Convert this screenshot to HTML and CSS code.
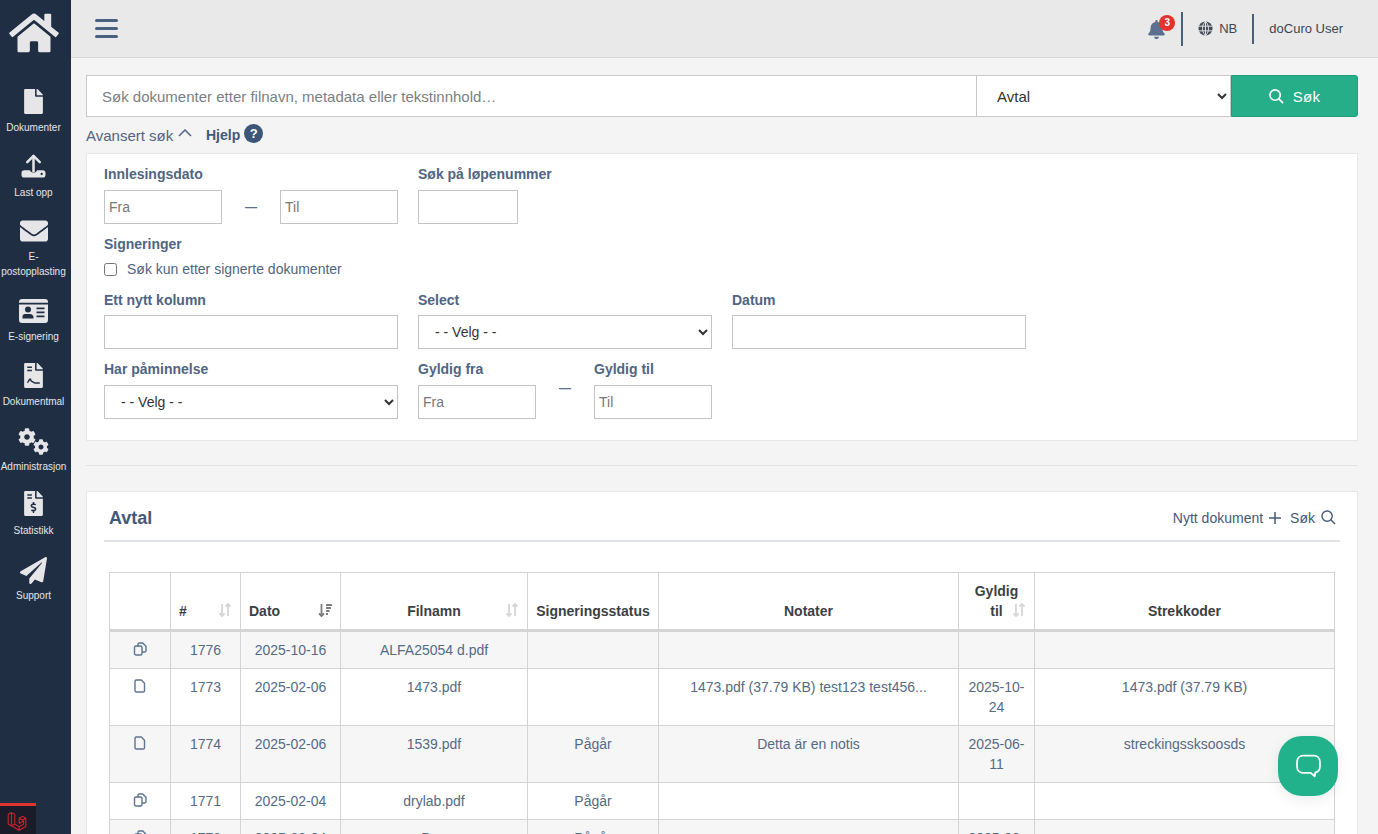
FILE: index.html
```html
<!DOCTYPE html>
<html lang="nb">
<head>
<meta charset="utf-8">
<title>doCuro</title>
<link rel="stylesheet" href="styles.css">
</head>
<body>
<div class="app">
  <aside class="sidebar">
    <a class="home"><svg viewBox="0 0 576 512" class="home-icon"><path d="M280.37 148.26L96 300.11V464a16 16 0 0 0 16 16l112.06-.29a16 16 0 0 0 15.92-16V368a16 16 0 0 1 16-16h64a16 16 0 0 1 16 16v95.64a16 16 0 0 0 16 16.05L464 480a16 16 0 0 0 16-16V300L295.67 148.26a12.19 12.19 0 0 0-15.3 0zM571.6 251.47L488 182.56V44.05a12 12 0 0 0-12-12h-56a12 12 0 0 0-12 12v72.61L318.47 43a48 48 0 0 0-61 0L4.34 251.47a12 12 0 0 0-1.6 16.9l25.5 31A12 12 0 0 0 45.15 301l235.22-193.74a12.19 12.19 0 0 1 15.3 0L530.9 301a12 12 0 0 0 16.9-1.6l25.5-31a12 12 0 0 0-1.7-16.93z"/></svg></a>
    <nav class="nav">
      <a class="nav-item"><span class="nav-icon"><svg viewBox="0 0 384 512" class="i-file"><path d="M224 136V0H24C10.7 0 0 10.7 0 24v464c0 13.3 10.7 24 24 24h336c13.3 0 24-10.7 24-24V160H248c-13.2 0-24-10.8-24-24zm160-14.1v6.1H256V0h6.1c6.4 0 12.5 2.5 17 7l97.9 98c4.5 4.5 7 10.6 7 16.9z"/></svg></span><span class="nav-label">Dokumenter</span></a>
      <a class="nav-item"><span class="nav-icon"><svg viewBox="0 0 26 26" class="i-upload"><path d="M13 2.5V18" class="st"/><path d="M6.5 8.5L13 2l6.5 6.5" class="st"/><path d="M3.5 17H9c.5 0 .8 2.4 4 2.4S16.500 17 17 17h5.500a3 3 0 0 1 3 3v1.500a3 3 0 0 1-3 3h-19a3 3 0 0 1-3-3V20a3 3 0 0 1 3-3z"/><circle cx="21.500" cy="20.800" r="1.200" class="hole"/></svg></span><span class="nav-label">Last opp</span></a>
      <a class="nav-item nav-tall"><span class="nav-icon"><svg viewBox="0 0 512 512" class="i-wide"><path d="M502.3 190.800c3.900-3.100 9.700-.2 9.700 4.700V400c0 26.500-21.500 48-48 48H48c-26.500 0-48-21.500-48-48V195.600c0-5 5.700-7.800 9.700-4.700 22.400 17.400 52.100 39.500 154.100 113.600 21.100 15.400 56.700 47.800 92.200 47.600 35.700.3 72-32.800 92.300-47.600 102-74.100 131.600-96.300 154-113.700zM256 320c23.200.4 56.600-29.200 73.400-41.400 132.700-96.300 142.800-104.700 173.400-128.700 5.800-4.500 9.200-11.500 9.200-18.900v-19c0-26.500-21.500-48-48-48H48C21.500 64 0 85.500 0 112v19c0 7.400 3.400 14.300 9.200 18.900 30.600 23.900 40.700 32.400 173.400 128.700 16.800 12.200 50.200 41.800 73.400 41.400z"/></svg></span><span class="nav-label">E-postopplasting</span></a>
      <a class="nav-item"><span class="nav-icon"><svg viewBox="0 0 29 24" class="i-id"><path d="M3 0h23a3 3 0 0 1 3 3v.8H0V3a3 3 0 0 1 3-3z"/><path fill-rule="evenodd" d="M0 5.500h29V21a3 3 0 0 1-3 3H3a3 3 0 0 1-3-3zM17.500 8.500v1.800h8V8.500zm0 4v1.800h8v-1.800zm0 4v1.800h8v-1.800zM9 7.500a3 3 0 1 0 0 6 3 3 0 0 0 0-6zM3.500 19.500h11v-1.300c0-2-1.500-3.300-3.500-3.300H6c-2 0-2.500 1.300-2.500 3.300z"/></svg></span><span class="nav-label">E-signering</span></a>
      <a class="nav-item"><span class="nav-icon"><svg viewBox="0 0 384 512" class="i-file"><path fill-rule="evenodd" d="M224 136V0H24C10.700 0 0 10.700 0 24v464c0 13.300 10.700 24 24 24h336c13.300 0 24-10.700 24-24V160H248c-13.200 0-24-10.800-24-24zM64 72v32h96V72zm0 64v32h96v-32zM384 121.900v6.100H256V0h6.100c6.400 0 12.500 2.500 17 7l97.900 98c4.500 4.500 7 10.600 7 16.900z"/><path d="M64 398c30 0 36-70 58-70 16 0 14 50 38 50 22 0 24 30 60 30h100" class="sig"/></svg></span><span class="nav-label">Dokumentmal</span></a>
      <a class="nav-item nav-short"><span class="nav-icon"><svg viewBox="0 0 512 512" class="i-gear-a"><path d="M487.4 315.7l-42.6-24.6c4.3-23.2 4.3-47 0-70.2l42.6-24.6c4.9-2.8 7.1-8.6 5.5-14-11.100-35.600-30-67.800-54.700-94.600-3.800-4.100-10-5.100-14.800-2.300L380.800 110c-17.900-15.400-38.500-27.300-60.800-35.100V25.800c0-5.600-3.900-10.500-9.400-11.700-36.700-8.200-74.300-7.800-109.200 0-5.500 1.200-9.400 6.100-9.400 11.700V75c-22.200 7.900-42.800 19.800-60.800 35.100L88.700 85.500c-4.900-2.800-11-1.900-14.800 2.300-24.700 26.700-43.600 58.900-54.700 94.600-1.700 5.400.6 11.200 5.500 14L67.300 221c-4.300 23.200-4.300 47 0 70.200l-42.600 24.600c-4.900 2.800-7.100 8.600-5.500 14 11.100 35.600 30 67.800 54.700 94.600 3.800 4.100 10 5.100 14.800 2.300l42.600-24.600c17.900 15.400 38.500 27.300 60.800 35.100v49.200c0 5.600 3.900 10.500 9.400 11.700 36.700 8.200 74.300 7.800 109.200 0 5.500-1.200 9.400-6.100 9.400-11.700v-49.200c22.200-7.900 42.800-19.800 60.800-35.100l42.600 24.600c4.900 2.800 11 1.900 14.800-2.300 24.700-26.700 43.600-58.900 54.700-94.600 1.500-5.500-.7-11.300-5.600-14.100zM256 336c-44.100 0-80-35.900-80-80s35.900-80 80-80 80 35.900 80 80-35.900 80-80 80z"/></svg><svg viewBox="0 0 512 512" class="i-gear-b"><path d="M487.4 315.7l-42.6-24.6c4.3-23.2 4.3-47 0-70.2l42.6-24.6c4.9-2.8 7.1-8.6 5.5-14-11.100-35.600-30-67.800-54.700-94.600-3.800-4.100-10-5.100-14.800-2.300L380.800 110c-17.900-15.400-38.500-27.300-60.800-35.100V25.800c0-5.600-3.900-10.500-9.400-11.700-36.700-8.200-74.300-7.800-109.200 0-5.500 1.200-9.400 6.100-9.400 11.700V75c-22.200 7.900-42.800 19.800-60.800 35.100L88.700 85.500c-4.900-2.800-11-1.900-14.800 2.300-24.700 26.700-43.600 58.900-54.700 94.600-1.700 5.400.6 11.200 5.500 14L67.300 221c-4.300 23.200-4.300 47 0 70.200l-42.600 24.600c-4.900 2.800-7.100 8.600-5.500 14 11.100 35.600 30 67.800 54.700 94.600 3.800 4.100 10 5.100 14.800 2.300l42.600-24.600c17.900 15.400 38.500 27.300 60.800 35.100v49.200c0 5.600 3.900 10.500 9.400 11.700 36.700 8.200 74.300 7.800 109.200 0 5.500-1.200 9.400-6.100 9.400-11.700v-49.200c22.200-7.900 42.800-19.800 60.800-35.100l42.600 24.600c4.900 2.800 11 1.900 14.800-2.300 24.700-26.700 43.600-58.900 54.700-94.600 1.500-5.500-.7-11.300-5.600-14.100zM256 336c-44.100 0-80-35.900-80-80s35.900-80 80-80 80 35.900 80 80-35.900 80-80 80z"/></svg></span><span class="nav-label">Administrasjon</span></a>
      <a class="nav-item"><span class="nav-icon"><svg viewBox="0 0 384 512" class="i-file i-dollar"><path d="M377 105L279.100 7c-4.500-4.500-10.600-7-17-7H256v128h128v-6.100c0-6.300-2.500-12.400-7-16.900zm-153 31V0H24C10.700 0 0 10.700 0 24v464c0 13.300 10.700 24 24 24h336c13.300 0 24-10.700 24-24V160H248c-13.200 0-24-10.800-24-24zM64 72c0-4.420 3.580-8 8-8h80c4.420 0 8 3.580 8 8v16c0 4.420-3.580 8-8 8H72c-4.420 0-8-3.580-8-8V72zm0 80v-16c0-4.420 3.580-8 8-8h80c4.420 0 8 3.580 8 8v16c0 4.420-3.580 8-8 8H72c-4.420 0-8-3.580-8-8zm144 263.880V440c0 4.420-3.580 8-8 8h-16c-4.420 0-8-3.580-8-8v-24.290c-11.290-.58-22.270-4.520-31.370-11.350-3.900-2.930-4.100-8.770-.57-12.140l11.750-11.210c2.770-2.640 6.890-2.760 10.130-.73 3.870 2.420 8.260 3.720 12.820 3.720h28.110c6.500 0 11.800-5.920 11.800-13.190 0-5.950-3.610-11.190-8.770-12.730l-45-13.500c-18.590-5.580-31.580-23.420-31.580-43.390 0-24.520 19.050-44.440 42.670-45.070V232c0-4.420 3.580-8 8-8h16c4.420 0 8 3.580 8 8v24.290c11.290.58 22.270 4.510 31.370 11.350 3.900 2.930 4.100 8.770.57 12.140l-11.750 11.210c-2.770 2.640-6.890 2.760-10.130.73-3.870-2.430-8.260-3.720-12.820-3.720h-28.110c-6.500 0-11.800 5.920-11.800 13.190 0 5.950 3.610 11.190 8.770 12.730l45 13.500c18.590 5.580 31.580 23.420 31.580 43.390 0 24.530-19.050 44.440-42.670 45.070z"/></svg></span><span class="nav-label">Statistikk</span></a>
      <a class="nav-item"><span class="nav-icon"><svg viewBox="0 0 512 512" class="i-plane"><path d="M476 3.200L12.500 270.600c-18.100 10.400-15.800 35.600 2.200 43.200L121 358.400l287.300-253.200c5.500-4.900 13.300 2.600 8.600 8.300L176 407v80.500c0 23.600 28.500 32.900 42.500 15.800L282 426l124.600 52.200c14.200 6 30.400-2.900 33-18.200l72-432C515 7.800 493.300-6.800 476 3.200z"/></svg></span><span class="nav-label">Support</span></a>
    </nav>
  </aside>

  <div class="content">
    <header class="topbar">
      <button class="burger" type="button" aria-label="Meny"><span></span><span></span><span></span></button>
      <div class="top-right">
        <div class="bell"><svg viewBox="0 0 448 512" class="bell-icon"><path d="M224 512c35.320 0 63.970-28.650 63.970-64H160.030c0 35.350 28.650 64 63.970 64zm215.390-149.710c-19.320-20.760-55.470-51.990-55.470-154.290 0-77.700-54.480-139.900-127.940-155.160V32c0-17.670-14.320-32-31.980-32s-31.980 14.330-31.980 32v20.840C118.560 68.100 64.080 130.300 64.080 208c0 102.300-36.150 133.530-55.470 154.290-6 6.450-8.660 14.160-8.610 21.710.11 16.400 12.980 32 32.100 32h383.800c19.120 0 32-15.600 32.100-32 .05-7.550-2.610-15.270-8.610-21.710z"/></svg><span class="badge">3</span></div>
        <span class="divider tall"></span>
        <div class="lang"><svg viewBox="0 0 16 16" class="globe"><circle cx="8" cy="8" r="7.500"/><path d="M.5 5.500h15M.5 10.500h15M8 .5v15M8 .5C5.500 3 4.800 5.500 4.800 8s.7 5 3.200 7.500M8 .5c2.500 2.500 3.200 5 3.200 7.500s-.7 5-3.200 7.500" class="globe-lines"/></svg><span>NB</span></div>
        <span class="divider"></span>
        <div class="user">doCuro User</div>
      </div>
    </header>

    <main class="main">
      <form class="searchbar">
        <input class="search-input" type="text" placeholder="Søk dokumenter etter filnavn, metadata eller tekstinnhold…">
        <select class="search-select"><option>Avtal</option></select>
        <button class="search-btn" type="button"><svg viewBox="0 0 16 16" class="search-icon"><circle cx="6.500" cy="6.500" r="5.500"/><path d="M10.500 10.500L15 15"/></svg><span>Søk</span></button>
      </form>

      <div class="adv-row">
        <span class="adv-link">Avansert søk<svg viewBox="0 0 14 8" class="chev"><path d="M1 7l6-6 6 6"/></svg></span>
        <span class="help">Hjelp</span>
        <span class="help-dot">?</span>
      </div>

      <section class="filters">
        <div class="filter-row">
          <div class="col">
            <label class="lbl">Innlesingsdato</label>
            <div class="range"><input class="ctl" placeholder="Fra"><span class="dash">—</span><input class="ctl" placeholder="Til"></div>
          </div>
          <div class="col">
            <label class="lbl">Søk på løpenummer</label>
            <input class="ctl short">
          </div>
        </div>
        <div class="sign-block">
          <label class="lbl">Signeringer</label>
          <label class="check"><input type="checkbox"><span>Søk kun etter signerte dokumenter</span></label>
        </div>
        <div class="filter-row row-c">
          <div class="col"><label class="lbl">Ett nytt kolumn</label><input class="ctl"></div>
          <div class="col"><label class="lbl">Select</label><select class="ctl sel"><option>- - Velg - -</option></select></div>
          <div class="col"><label class="lbl">Datum</label><input class="ctl"></div>
        </div>
        <div class="filter-row row-d">
          <div class="col"><label class="lbl">Har påminnelse</label><select class="ctl sel"><option>- - Velg - -</option></select></div>
          <div class="col">
            <div class="range labels"><label class="lbl">Gyldig fra</label><label class="lbl">Gyldig til</label></div>
            <div class="range"><input class="ctl" placeholder="Fra"><span class="dash up">—</span><input class="ctl" placeholder="Til"></div>
          </div>
        </div>
      </section>

      <hr class="sep">

      <section class="card">
        <div class="card-head">
          <h2 class="card-title">Avtal</h2>
          <div class="card-actions">
            <span class="act">Nytt dokument<svg viewBox="0 0 12 12" class="act-icon"><path d="M6 0v12M0 6h12"/></svg></span>
            <span class="act">Søk<svg viewBox="0 0 16 16" class="act-icon search"><circle cx="6.500" cy="6.500" r="5.500"/><path d="M10.500 10.500L15 15"/></svg></span>
          </div>
        </div>
        <table class="grid">
          <colgroup><col class="c1"><col class="c2"><col class="c3"><col class="c4"><col class="c5"><col class="c6"><col class="c7"><col class="c8"></colgroup>
          <thead>
            <tr>
              <th></th>
              <th class="sortable left"><span>#</span><svg viewBox="0 0 14 14" class="sort"><path d="M4 1v12M1.500 10.500L4 13l2.500-2.500M10 13V1M7.500 3.500L10 1l2.500 2.500"/></svg></th>
              <th class="sortable left"><span>Dato</span><svg viewBox="0 0 14 14" class="sort on"><path d="M3.500 1v12M1 10.500L3.500 13 6 10.500M8 2h6M8 5h5M8 8h3.500M8 11h2"/></svg></th>
              <th class="sortable"><span class="mid">Filnamn</span><svg viewBox="0 0 14 14" class="sort"><path d="M4 1v12M1.500 10.500L4 13l2.500-2.500M10 13V1M7.500 3.500L10 1l2.500 2.500"/></svg></th>
              <th>Signeringsstatus</th>
              <th>Notater</th>
              <th class="sortable wrap"><span class="mid">Gyldig<br>til</span><svg viewBox="0 0 14 14" class="sort"><path d="M4 1v12M1.500 10.500L4 13l2.500-2.500M10 13V1M7.500 3.500L10 1l2.500 2.500"/></svg></th>
              <th>Strekkoder</th>
            </tr>
          </thead>
          <tbody>
            <tr class="odd">
              <td><svg viewBox="0 0 14 14" class="doc"><path d="M5 4.500V2.300A1.300 1.300 0 0 1 6.300 1h3.400L13 4.300v4.400A1.300 1.300 0 0 1 11.700 10H9"/><rect x="1.500" y="4" width="7.500" height="9" rx="1.500"/></svg></td>
              <td>1776</td><td>2025-10-16</td><td>ALFA25054 d.pdf</td><td></td><td></td><td></td><td></td>
            </tr>
            <tr>
              <td><svg viewBox="0 0 14 14" class="doc"><path d="M3.300 1h5L11.500 4.200v7.500A1.300 1.300 0 0 1 10.200 13H3.300A1.300 1.300 0 0 1 2 11.700V2.300A1.300 1.300 0 0 1 3.300 1z"/></svg></td>
              <td>1773</td><td>2025-02-06</td><td>1473.pdf</td><td></td><td>1473.pdf (37.79 KB) test123 test456...</td><td>2025-10-24</td><td>1473.pdf (37.79 KB)</td>
            </tr>
            <tr class="odd">
              <td><svg viewBox="0 0 14 14" class="doc"><path d="M3.300 1h5L11.500 4.200v7.500A1.300 1.300 0 0 1 10.200 13H3.300A1.300 1.300 0 0 1 2 11.700V2.300A1.300 1.300 0 0 1 3.300 1z"/></svg></td>
              <td>1774</td><td>2025-02-06</td><td>1539.pdf</td><td>Pågår</td><td>Detta är en notis</td><td>2025-06-11</td><td>streckingssksoosds</td>
            </tr>
            <tr>
              <td><svg viewBox="0 0 14 14" class="doc"><path d="M5 4.500V2.300A1.300 1.300 0 0 1 6.300 1h3.400L13 4.300v4.400A1.300 1.300 0 0 1 11.700 10H9"/><rect x="1.500" y="4" width="7.500" height="9" rx="1.500"/></svg></td>
              <td>1771</td><td>2025-02-04</td><td>drylab.pdf</td><td>Pågår</td><td></td><td></td><td></td>
            </tr>
            <tr class="odd">
              <td><svg viewBox="0 0 14 14" class="doc"><path d="M5 4.500V2.300A1.300 1.300 0 0 1 6.300 1h3.400L13 4.300v4.400A1.300 1.300 0 0 1 11.700 10H9"/><rect x="1.500" y="4" width="7.500" height="9" rx="1.500"/></svg></td>
              <td>1770</td><td>2025-02-04</td><td>Dr...</td><td>Pågår</td><td></td><td>2025-06-11</td><td></td>
            </tr>
          </tbody>
        </table>
      </section>
    </main>
  </div>
</div>

<div class="debugbar"><svg viewBox="0 0 20 20" class="laravel"><path d="M2 3l3-1.500L8 3v9l4 2.300 4-2.300V9l-4 2.300M8 12L5 13.500 2 12V3M5 1.500V13.500M5 13.500l7 4 6-3.500V6.500l-3-1.700-3 1.700V11.300M12 6.500l3 1.700 3-1.700M12 14.300v3.200"/></svg></div>
<button class="chat" type="button" aria-label="Chat"><svg viewBox="0 0 26 26" class="chat-icon"><path d="M8 2.500h10c3.500 0 6 2.500 6 6v4.500c0 3-2 5.300-4.500 5.800l-.5 3.700-3.800-3.300H8c-3.500 0-6-2.500-6-6V8.500c0-3.500 2.500-6 6-6z"/></svg></button>
</body>
</html>
```
FILE: styles.css
```css
* { box-sizing: border-box; }
html, body { margin: 0; height: 834px; overflow: hidden; }
body { font-family: "Liberation Sans", Arial, sans-serif; font-size: 14px; color: #4a5f7c; background: #f4f4f5; }
.app { display: flex; height: 834px; }

/* sidebar */
.sidebar { width: 71px; flex: none; background: #1f2e43; color: #e6e6e6; display: flex; flex-direction: column; align-items: flex-start; }
.home { width: 67px; height: 87px; padding-top: 11px; display: flex; justify-content: center; }
.home-icon { width: 50px; height: 44px; fill: #e6e6e8; display: block; }
.nav { width: 67px; display: flex; flex-direction: column; }
.nav-item { height: 65px; display: flex; flex-direction: column; align-items: center; text-align: center; }
.nav-item.nav-tall { height: 79px; }
.nav-item.nav-short { height: 64px; }
.nav-icon { height: 31px; position: relative; display: flex; align-items: flex-start; justify-content: center; margin-bottom: 2px; }
.nav-tall .nav-icon { margin-bottom: 1px; }
.nav-label { font-size: 10px; line-height: 15px; color: #e4e6e9; width: 67px; }
.nav-icon svg { fill: #e6e6e8; display: block; }
.i-file { width: 19px; height: 25px; margin-top: 2px; }
.i-dollar { margin-top: 1px; }
.i-upload { width: 25px; height: 25px; margin-top: 2px; overflow: visible; }
.i-upload .st { fill: none; stroke: #e6e6e8; stroke-width: 2.600; stroke-linecap: round; stroke-linejoin: round; }
.i-upload .hole { fill: #1f2e43; }
.i-wide { width: 28px; height: 28px; margin-top: 0; }
.i-id { width: 29px; height: 24px; margin-top: 3px; }
.nav-short .nav-icon { width: 31px; }
.i-gear-a { width: 18px; height: 18px; margin: 2px 13px 0 0; flex: none; }
.nav-icon .i-gear-b { position: absolute; left: 15px; top: 13px; width: 16px; height: 16px; }
.i-plane { width: 27px; height: 27px; margin-top: 2px; }
.sig { fill: none; stroke: #1f2e43; stroke-width: 32; }

/* top bar */
.content { flex: 1; min-width: 0; display: flex; flex-direction: column; }
.topbar { height: 58px; flex: none; background: #e9e9ea; border-bottom: 1px solid #d5d7dc; display: flex; align-items: center; justify-content: space-between; padding: 0 35px 0 24px; }
.burger { width: 23px; padding: 0; border: 0; background: none; display: flex; flex-direction: column; gap: 5px; }
.burger span { display: block; height: 3px; border-radius: 2px; background: #4a6080; }
.top-right { display: flex; align-items: center; color: #3f4550; font-size: 13px; }
.bell { position: relative; width: 18px; height: 18px; margin-top: 0; }
.bell-icon { width: 17px; height: 19px; fill: #5b7190; display: block; }
.badge { position: absolute; left: 11px; top: -5px; width: 16px; height: 16px; border-radius: 50%; background: #e5322f; color: #fff; font-size: 10px; font-weight: 700; line-height: 16px; text-align: center; }
.divider { width: 2px; height: 30px; background: #4a6078; margin: 0 15px; }
.divider.tall { height: 34px; margin-left: 15px; margin-right: 15px; }
.lang { display: flex; align-items: center; gap: 6px; color: #3f4550; }
.globe { width: 15px; height: 15px; display: block; }
.globe circle { fill: #444c58; }
.globe-lines { fill: none; stroke: #e9e9ea; stroke-width: 1; }

/* main */
.main { flex: 1; min-height: 0; padding: 17px 20px 0 15px; }
.searchbar { display: flex; height: 42px; }
.search-input { flex: 1; min-width: 0; height: 42px; border: 1px solid #c9c9c9; border-right: 0; background: #fff; padding: 1px 15px 0; font: 15px "Liberation Sans", Arial, sans-serif; color: #444; }
.search-input::placeholder { color: #7b7f84; opacity: 1; }
.search-select { width: 255px; height: 42px; flex: none; border: 1px solid #c9c9c9; background: #fff; border-radius: 0; padding: 1px 0 0 16px; font: 15px "Liberation Sans", Arial, sans-serif; color: #333; }
.search-btn { width: 127px; height: 42px; flex: none; border: 1px solid #1f9e7a; border-radius: 0 3px 3px 0; background: #26ae88; color: #fff; font: 15px "Liberation Sans", Arial, sans-serif; letter-spacing: .3px; display: flex; align-items: center; justify-content: center; gap: 9px; }
.search-icon { width: 15px; height: 15px; fill: none; stroke: #fff; stroke-width: 1.800; }
.adv-row { height: 36px; display: flex; align-items: center; color: #4f6583; font-size: 15px; }
.adv-link { display: flex; align-items: center; gap: 5px; width: 120px; }
.chev { width: 14px; height: 8px; fill: none; stroke: #4f6583; stroke-width: 1.500; margin-top: -4px; }
.help { font-weight: 700; font-size: 14px; color: #43597a; }
.help-dot { width: 19px; height: 19px; margin-left: 4px; margin-top: -3px; border-radius: 50%; background: #3d5678; color: #fff; font-size: 13px; font-weight: 700; line-height: 19px; text-align: center; }
.filters { height: 288px; background: #fff; border: 1px solid #e7e7e9; padding: 10px 17px 0; }
.filter-row { display: flex; gap: 20px; }
.col { width: 294px; display: flex; flex-direction: column; }
.lbl { display: block; font-weight: 700; font-size: 14px; line-height: 20px; color: #4f6583; }
.col > .lbl { margin-bottom: 6px; }
.ctl { width: 100%; height: 34px; border: 1px solid #c4c4c4; background: #fff; border-radius: 0; padding: 0 4px; font: 14px "Liberation Sans", Arial, sans-serif; color: #333; }
.ctl::placeholder { color: #777; opacity: 1; }
.ctl.short { width: 100px; }
.sel { padding-left: 12px; }
.range { display: flex; align-items: center; }
.range .ctl { width: 118px; flex: none; }
.dash { width: 58px; text-align: center; color: #5a6f8c; font-size: 12px; font-weight: 700; }
.dash.up { align-self: flex-start; margin-top: -4px; }
.labels { margin-bottom: 6px; }
.labels .lbl { width: 176px; flex: none; }
.sign-block { margin-top: 10px; }
.check { display: flex; align-items: center; gap: 10px; margin-top: 5px; height: 20px; color: #4f6583; }
.check input { width: 13px; height: 13px; margin: 0; }
.row-c { margin-top: 11px; }
.row-c .col > .lbl { margin-bottom: 5px; }
.row-d { margin-top: 10px; }
.sep { border: 0; border-top: 1px solid #dfe1e5; margin: 24px 0 25px; }
.card { background: #fff; border: 1px solid #e7e7e9; height: 400px; padding: 0 17px; }
.card-head { height: 50px; border-bottom: 2px solid #dfe2e6; display: flex; align-items: center; justify-content: space-between; padding: 5px 4px 0 5px; }
.card-title { margin: 0; font-size: 18px; font-weight: 700; color: #46597a; }
.card-actions { display: flex; gap: 9px; margin-top: -2px; }
.act { display: flex; align-items: center; gap: 6px; color: #46597a; font-size: 14px; }
.act-icon { width: 12px; height: 12px; fill: none; stroke: #46597a; stroke-width: 1.500; }
.act-icon.search { width: 15px; height: 15px; stroke-width: 1.500; }

/* table */
.grid { width: 1226px; margin: 30px 0 0 5px; border-collapse: collapse; table-layout: fixed; font-size: 14px; color: #556a85; text-align: center; }
.c1 { width: 61px; } .c2 { width: 70px; } .c3 { width: 100px; } .c4 { width: 187px; }
.c5 { width: 131px; } .c6 { width: 300px; } .c7 { width: 76px; } .c8 { width: 300px; }
th, td { border: 1px solid #d4d4d6; padding: 8px; line-height: 20px; vertical-align: top; }
th { height: 58px; border-bottom: 3px solid #d4d4d6; color: #3c3f44; font-weight: 700; vertical-align: bottom; padding-bottom: 8px; background: #fff; position: relative; }
.left { text-align: left; }
th.sortable .sort { position: absolute; right: 8px; bottom: 12px; }
th .mid { display: block; text-align: center; }
.sort { width: 14px; height: 14px; fill: none; stroke: #d6d6d6; stroke-width: 1.800; }
.sort.on { stroke: #7d7d7d; }
.wrap .sort { bottom: 12px; right: 7px; }
td { height: 37px; background: #fff; }
tr.odd td { background: #f6f6f7; }
.doc { width: 14px; height: 14px; fill: none; stroke: #5e7491; stroke-width: 1.400; display: block; margin: 2px auto 0; }

/* overlays */
.debugbar { position: fixed; left: 0; bottom: 0; width: 36px; height: 31px; background: #1b1c29; border-top: 3px solid #e0322f; padding: 5px 0 0 6px; }
.laravel { width: 22px; height: 22px; fill: none; stroke: #c8202f; stroke-width: 1; display: block; }
.chat { position: fixed; left: 1278px; top: 736px; width: 60px; height: 60px; border: 0; border-radius: 24px; background: #22b28b; box-shadow: 0 4px 14px rgba(0,0,0,.08); padding: 0; display: flex; align-items: center; justify-content: center; }
.chat-icon { width: 27px; height: 27px; fill: none; stroke: #fff; stroke-width: 1.700; stroke-linejoin: round; }
```
